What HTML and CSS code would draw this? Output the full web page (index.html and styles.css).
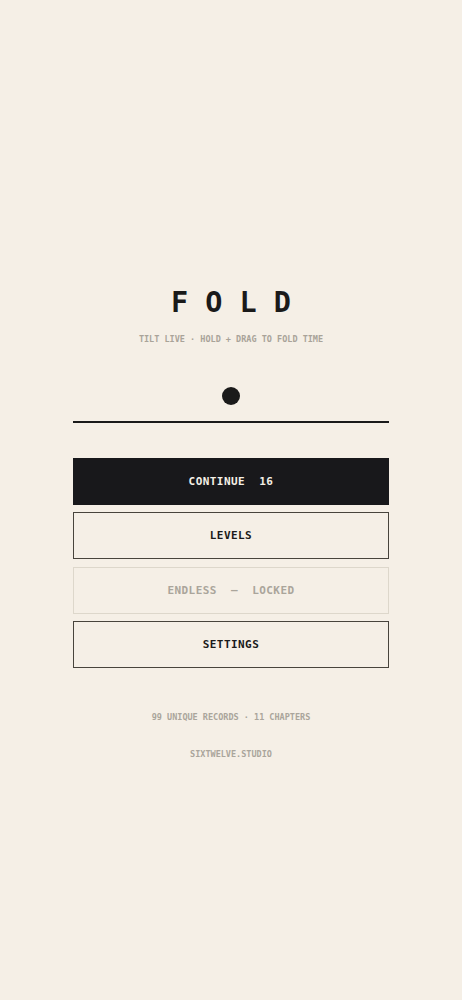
FILE: index.html
```html
<!DOCTYPE html>
<html>
<head>
<meta charset="utf-8">
<link rel="stylesheet" href="styles.css">
</head>
<body>
<main class="menu">
  <h1 class="title">FOLD</h1>
  <p class="subtitle">TILT LIVE · HOLD + DRAG TO FOLD TIME</p>
  <div class="dot"></div>
  <div class="rule"></div>
  <div class="buttons">
    <button class="btn btn-primary">CONTINUE  16</button>
    <button class="btn btn-outline">LEVELS</button>
    <button class="btn btn-locked">ENDLESS  —  LOCKED</button>
    <button class="btn btn-outline">SETTINGS</button>
  </div>
  <p class="meta">99 UNIQUE RECORDS · 11 CHAPTERS</p>
  <p class="studio">SIXTWELVE.STUDIO</p>
</main>
</body>
</html>
```

FILE: styles.css
```css
html, body {
  margin: 0;
  padding: 0;
  background: #f5efe6;
}

body {
  font-family: "DejaVu Sans Mono", "Liberation Mono", monospace;
  color: #1a1a1a;
}

.menu {
  width: 316px;
  margin: 0 auto;
  padding-top: 288.5px;
  display: flex;
  flex-direction: column;
  align-items: stretch;
}

.title {
  margin: 0;
  height: 28px;
  font-size: 28.5px;
  line-height: 28px;
  font-weight: bold;
  letter-spacing: 0.6em;
  padding-left: 0.6em;
  text-align: center;
  color: #1a1a1a;
}

.subtitle {
  margin: 16px 0 0;
  height: 12px;
  font-size: 8.5px;
  line-height: 12px;
  font-weight: bold;
  text-align: center;
  color: #a9a399;
}

.dot {
  width: 18px;
  height: 18px;
  border-radius: 50%;
  background: #1a1a1a;
  align-self: center;
  margin-top: 42px;
}

.rule {
  height: 2px;
  background: #1a1a1a;
  margin-top: 16px;
}

.buttons {
  margin-top: 35px;
  display: flex;
  flex-direction: column;
  gap: 7.5px;
}

.btn {
  box-sizing: border-box;
  height: 47px;
  width: 100%;
  font-family: "DejaVu Sans Mono", "Liberation Mono", monospace;
  font-size: 11px;
  font-weight: bold;
  letter-spacing: 0.04em;
  white-space: pre;
  text-align: center;
  padding: 0;
  border-radius: 0;
  cursor: pointer;
}

.btn-primary {
  background: #18181b;
  color: #f4efe6;
  border: 1px solid #18181b;
}

.btn-outline {
  background: transparent;
  color: #1a1a1a;
  border: 1px solid #48443c;
}

.btn-locked {
  background: transparent;
  color: #aaa59b;
  border: 1px solid #ddd7cb;
}

.meta {
  margin: 42.7px 0 0;
  height: 12px;
  font-size: 8.5px;
  line-height: 12px;
  font-weight: bold;
  text-align: center;
  color: #aaa59b;
}

.studio {
  margin: 25.5px 0 0;
  height: 12px;
  font-size: 8.5px;
  line-height: 12px;
  font-weight: bold;
  text-align: center;
  color: #aaa59b;
}
```
